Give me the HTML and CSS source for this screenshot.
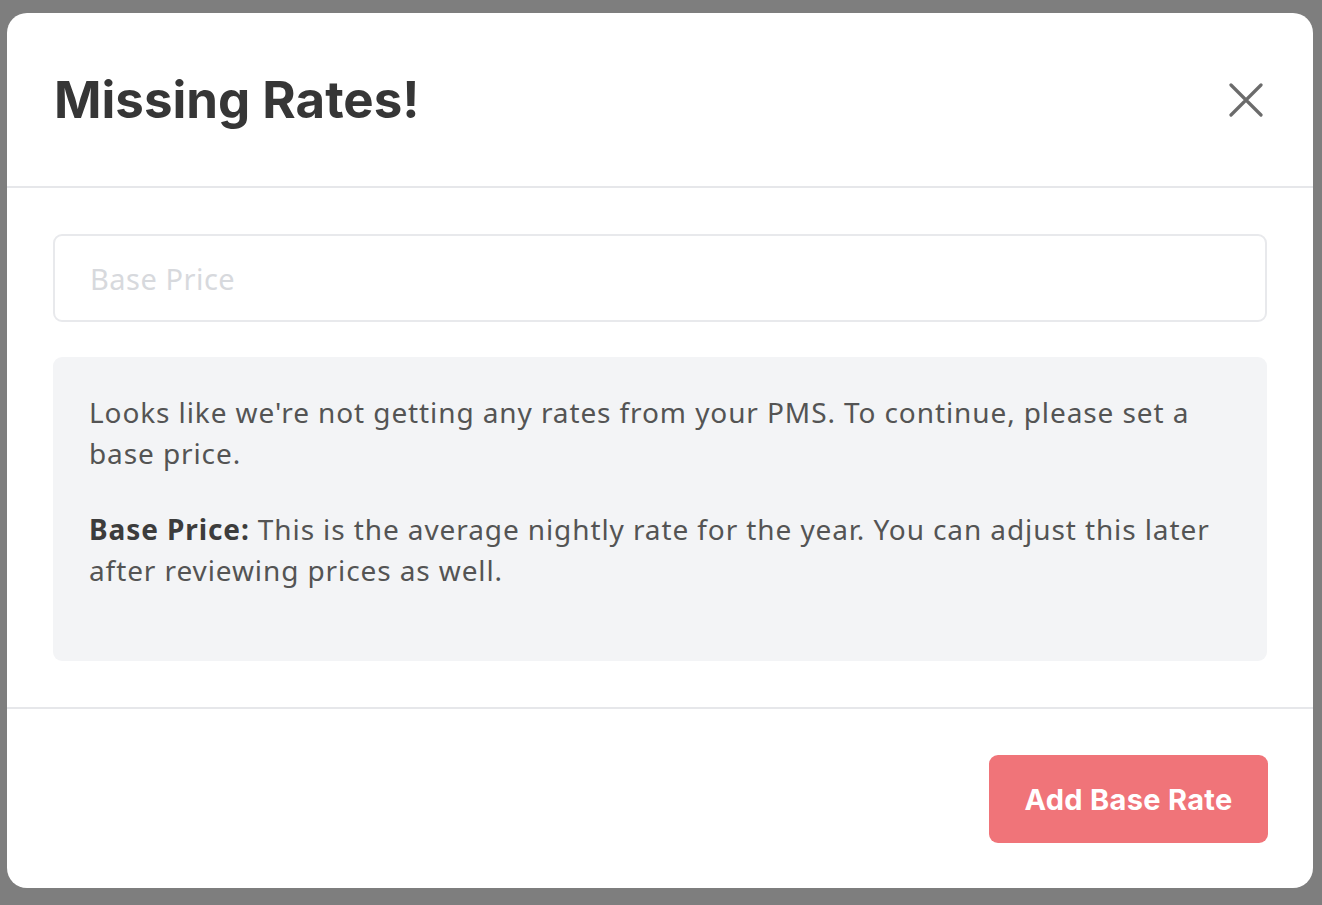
FILE: index.html
```html
<!DOCTYPE html>
<html>
<head>
<meta charset="utf-8">
<link rel="stylesheet" href="styles.css">
</head>
<body>
<div class="backdrop">
  <div class="modal">
    <div class="modal-header">
      <h1 class="title">Missing Rates!</h1>
      <button class="close" aria-label="Close">
        <svg viewBox="0 0 34 34" width="34" height="34"><path d="M2 2 L32 32 M32 2 L2 32" stroke="#6b6b6b" stroke-width="3.2" stroke-linecap="round" fill="none"/></svg>
      </button>
    </div>
    <div class="modal-body">
      <div class="input">Base Price</div>
      <div class="info">
        <p>Looks like we're not getting any rates from your PMS. To continue, please set a base price.</p>
        <p><strong>Base Price:</strong> This is the average nightly rate for the year. You can adjust this later after reviewing prices as well.</p>
      </div>
    </div>
    <div class="modal-footer">
      <button class="primary">Add Base Rate</button>
    </div>
  </div>
</div>
</body>
</html>
```
FILE: styles.css
```css
html, body {
  margin: 0;
  padding: 0;
  height: 100%;
}
body {
  background: #7e7e7e;
  font-family: "Noto Sans", Inter, sans-serif;
}
.backdrop {
  padding: 13px 9px 0 7px;
  height: 905px;
  box-sizing: border-box;
}
.modal {
  background: #fff;
  border-radius: 20px;
  height: 875px;
  display: flex;
  flex-direction: column;
  overflow: hidden;
}
.modal-header {
  height: 173px;
  border-bottom: 2px solid #e6e7ea;
  display: flex;
  align-items: center;
  justify-content: space-between;
  padding: 0 50px 0 47px;
  flex: none;
}
.title {
  margin: 0;
  font-family: Inter, "Noto Sans", sans-serif;
  font-weight: 700;
  font-size: 51px;
  color: #363636;
  letter-spacing: 0;
}
.close {
  border: 0;
  background: none;
  padding: 0;
  width: 34px;
  height: 34px;
  display: flex;
}
.modal-body {
  padding: 46px 46px 46px 46px;
  border-bottom: 2px solid #e6e7ea;
  display: flex;
  flex-direction: column;
  gap: 35px;
  flex: none;
}
.input {
  height: 88px;
  border: 2px solid #e8e9ec;
  border-radius: 9px;
  box-sizing: border-box;
  display: flex;
  align-items: center;
  padding-left: 35px;
  font-size: 29px;
  letter-spacing: 0.5px;
  color: #d7d9dd;
}
.info {
  background: #f3f4f6;
  border-radius: 9px;
  height: 304px;
  box-sizing: border-box;
  padding: 35px 36px 0 36px;
  font-size: 28px;
  letter-spacing: 0.9px;
  line-height: 41px;
  color: #545454;
}
.info p {
  margin: 0 0 35px;
}
.info strong {
  color: #3c3c3c;
  font-weight: 700;
}
.modal-footer {
  flex: 1;
  display: flex;
  justify-content: flex-end;
  align-items: flex-start;
  padding: 46px 45px 0 0;
}
.primary {
  width: 279px;
  height: 88px;
  border: 0;
  border-radius: 9px;
  background: #f07479;
  color: #fff;
  font-family: Inter, "Noto Sans", sans-serif;
  font-weight: 700;
  font-size: 29px;
  letter-spacing: 0.3px;
}
```
